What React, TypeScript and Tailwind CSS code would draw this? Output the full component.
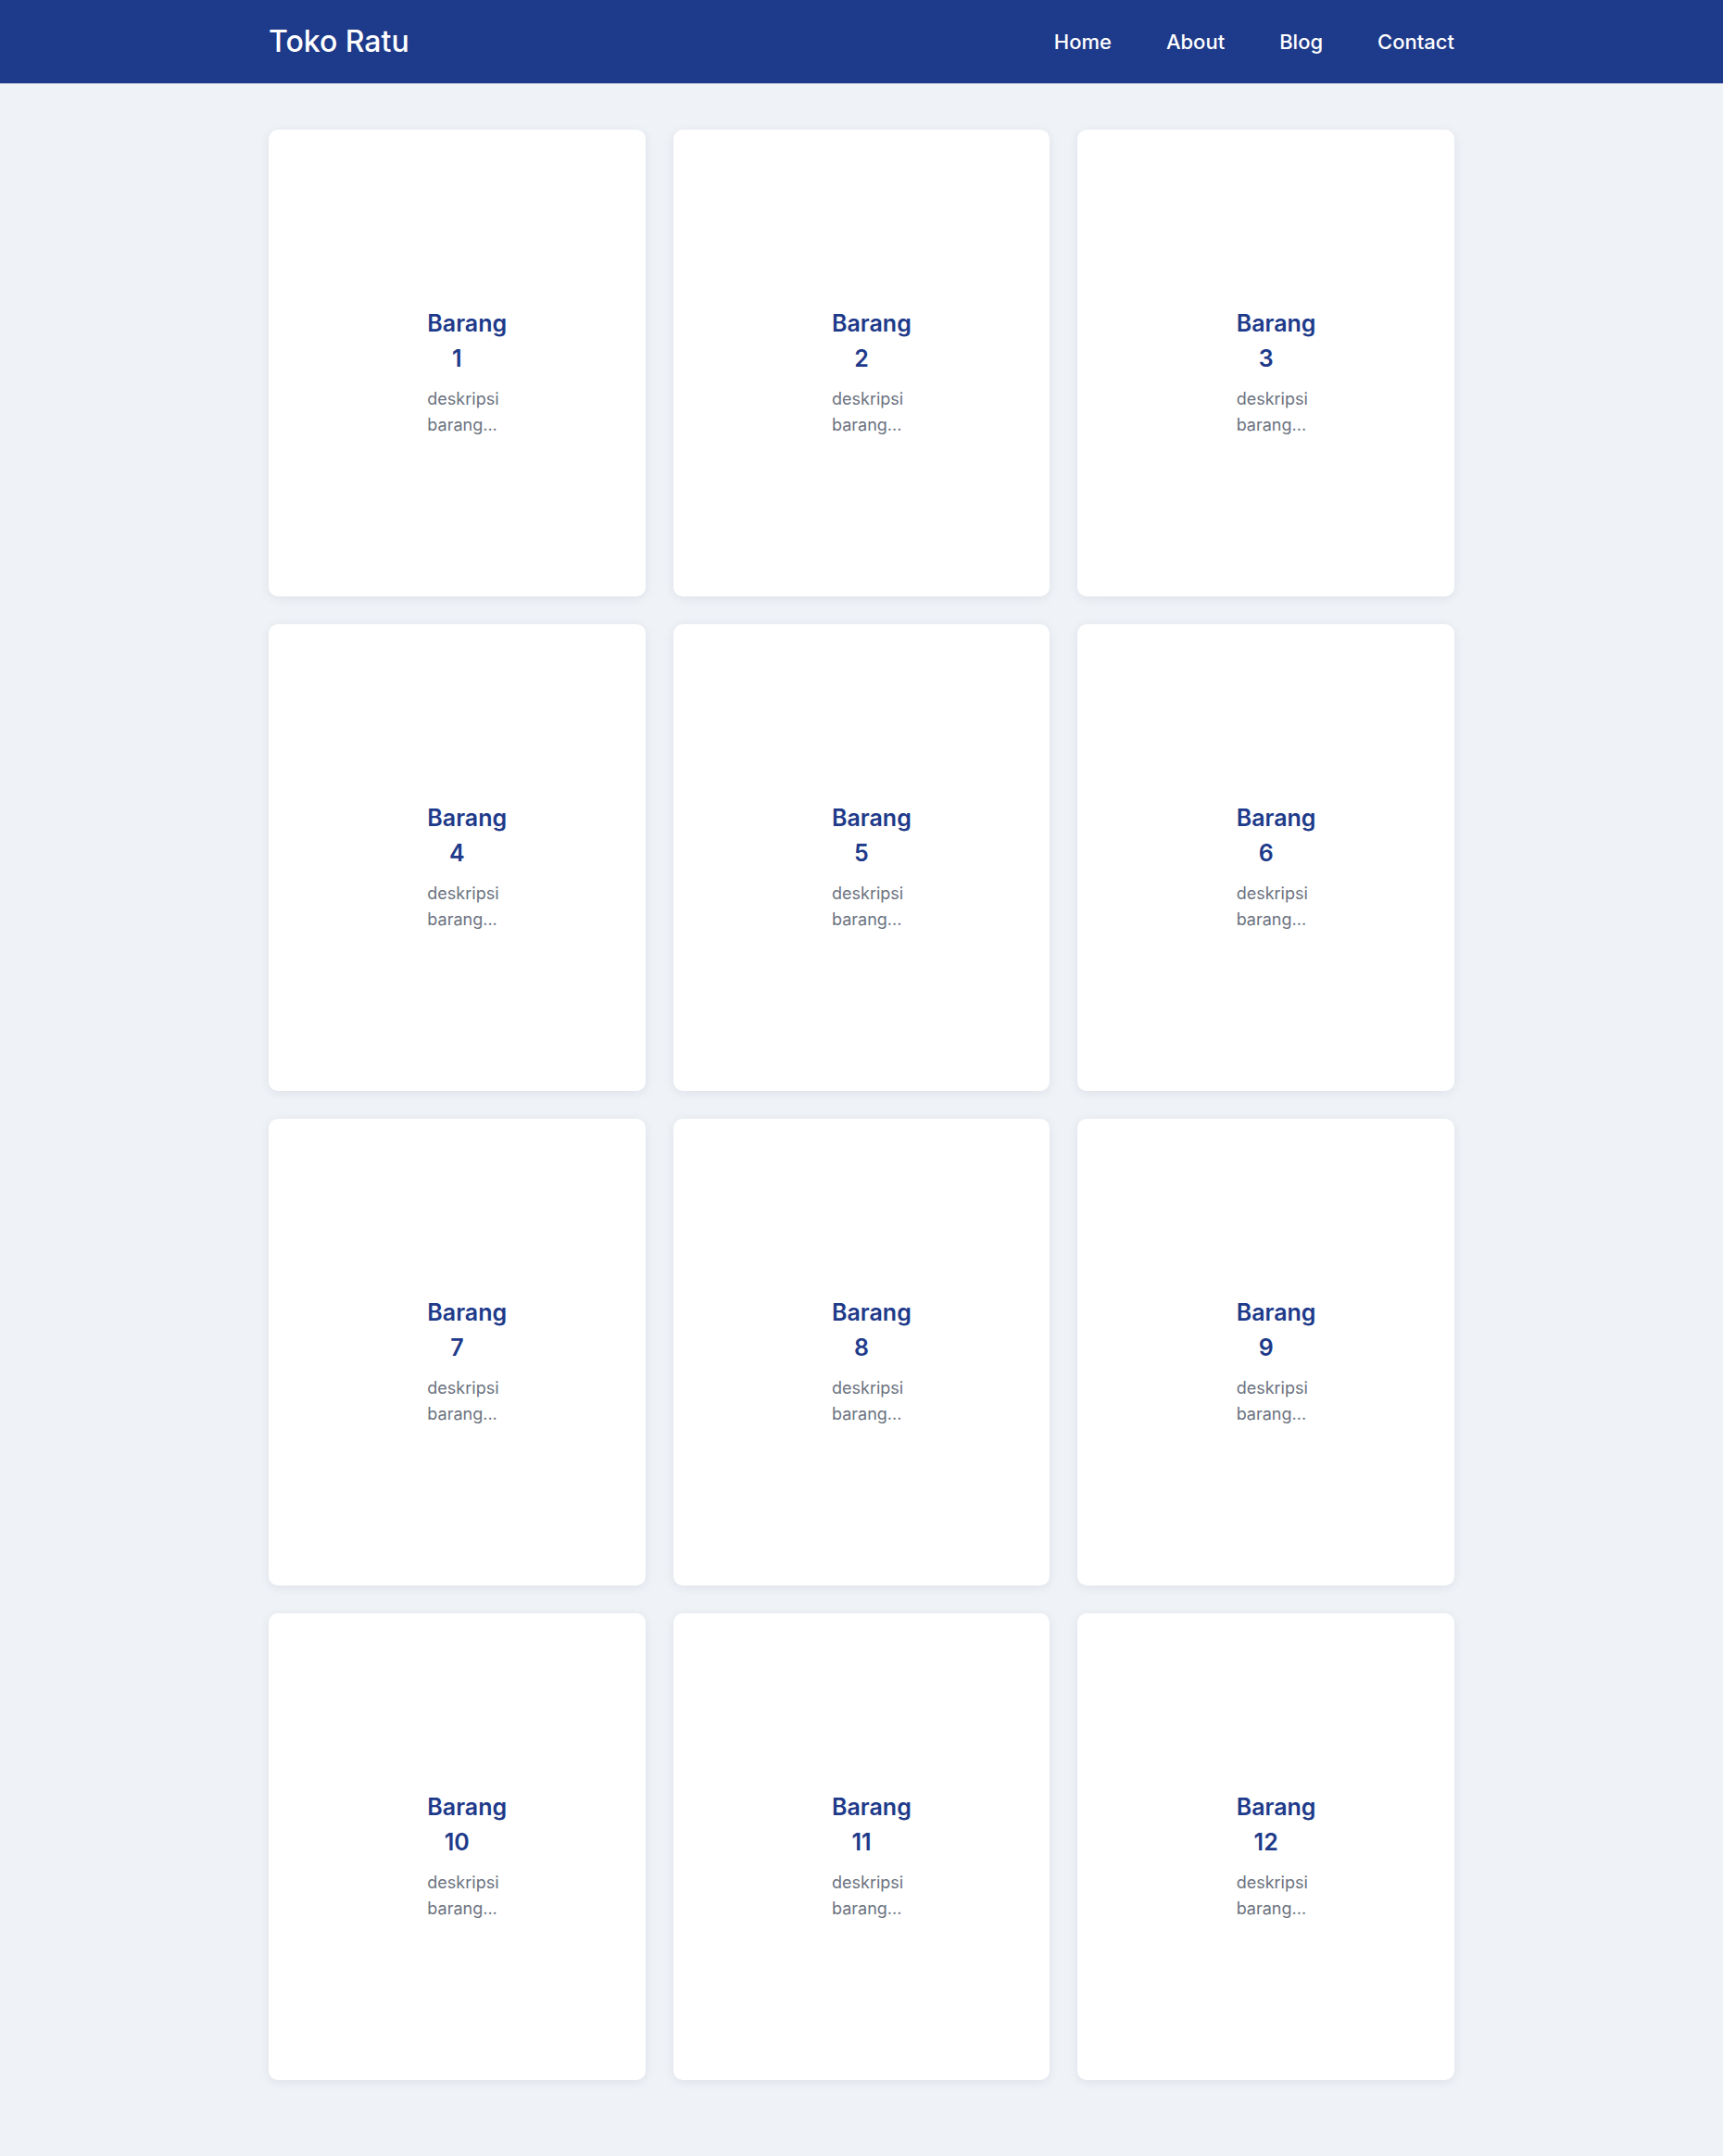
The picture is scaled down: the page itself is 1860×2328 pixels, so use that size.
const items = Array.from({ length: 12 }, (_, i) => ({
  id: i + 1,
  name: `Barang ${i + 1}`,
  desc: "deskripsi barang...",
}))

const links = ["Home", "About", "Blog", "Contact"]

function Navbar() {
  return (
    <nav className="h-[90px] bg-[#1e3a8a]">
      <div className="mx-auto flex h-full max-w-[1280px] items-center justify-between">
        <div className="text-[32px] font-medium text-white">Toko Ratu</div>
        <ul className="flex gap-[59px]">
          {links.map((l) => (
            <li key={l}>
              <a href="#" className="text-[22px] font-medium text-white">
                {l}
              </a>
            </li>
          ))}
        </ul>
      </div>
    </nav>
  )
}

function ProductCard({ name, desc }: { name: string; desc: string }) {
  return (
    <div className="flex h-[504px] flex-col items-center justify-center rounded-[10px] bg-white pt-[19px] shadow-[0_2px_12px_rgba(15,23,42,0.08)]">
      <div className="w-[64px] text-center">
        <h3 className="mb-[11px] text-[25px] leading-[38px] font-semibold text-[#1e3a8a]">{name}</h3>
        <p className="text-[18px] leading-[28px] text-[#6b7280]">{desc}</p>
      </div>
    </div>
  )
}

export default function App() {
  return (
    <div className="min-h-screen bg-[#eff2f7] font-['Inter',sans-serif]">
      <Navbar />
      <main className="mx-auto max-w-[1280px] pt-[50px] pb-[82px]">
        <div className="grid grid-cols-3 gap-[30px]">
          {items.map((item) => (
            <ProductCard key={item.id} name={item.name} desc={item.desc} />
          ))}
        </div>
      </main>
    </div>
  )
}
